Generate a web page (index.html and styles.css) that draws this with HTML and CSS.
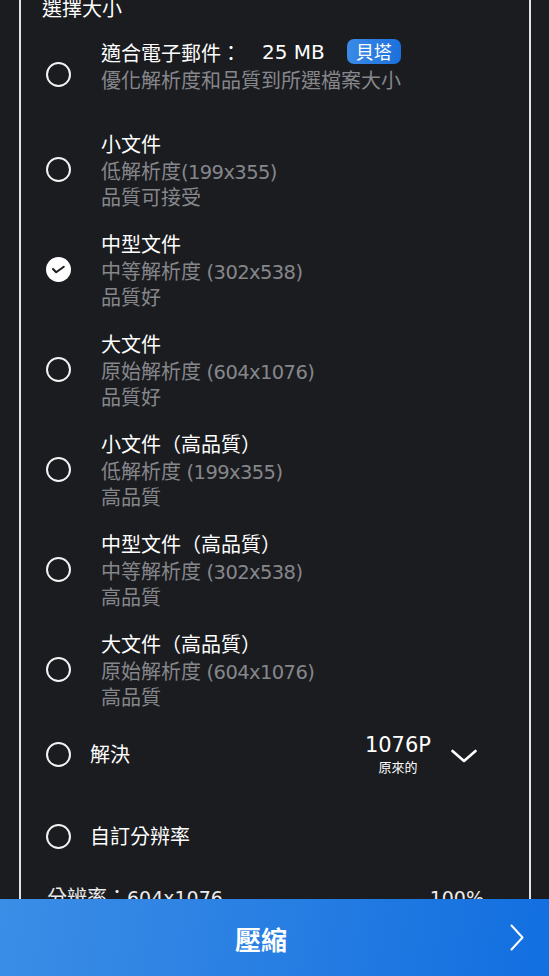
FILE: index.html
```html
<!DOCTYPE html>
<html lang="zh-Hant">
<head>
<meta charset="utf-8">
<title>壓縮</title>
<link rel="stylesheet" href="styles.css">
</head>
<body>
<div class="panel">
  <div class="heading">選擇大小</div>
  <div class="options">
    <div class="opt opt-first">
      <span class="radio"></span>
      <div class="txt">
        <div class="t">適合電子郵件：<span class="num">25 MB</span><span class="badge">貝塔</span></div>
        <div class="s">優化解析度和品質到所選檔案大小</div>
      </div>
    </div>
    <div class="opt">
      <span class="radio"></span>
      <div class="txt">
        <div class="t">小文件</div>
        <div class="s">低解析度<span class="lat">(199x355)</span></div>
        <div class="s">品質可接受</div>
      </div>
    </div>
    <div class="opt">
      <span class="radio checked"><svg viewBox="0 0 25 25" width="25" height="25"><path d="M7 12 L10.2 15.3 L17.8 9.8" fill="none" stroke="#1b1c20" stroke-width="2" stroke-linecap="round" stroke-linejoin="round"/></svg></span>
      <div class="txt">
        <div class="t">中型文件</div>
        <div class="s">中等解析度<span class="lat"> (302x538)</span></div>
        <div class="s">品質好</div>
      </div>
    </div>
    <div class="opt">
      <span class="radio"></span>
      <div class="txt">
        <div class="t">大文件</div>
        <div class="s">原始解析度<span class="lat"> (604x1076)</span></div>
        <div class="s">品質好</div>
      </div>
    </div>
    <div class="opt">
      <span class="radio"></span>
      <div class="txt">
        <div class="t">小文件（高品質）</div>
        <div class="s">低解析度<span class="lat"> (199x355)</span></div>
        <div class="s">高品質</div>
      </div>
    </div>
    <div class="opt">
      <span class="radio"></span>
      <div class="txt">
        <div class="t">中型文件（高品質）</div>
        <div class="s">中等解析度<span class="lat"> (302x538)</span></div>
        <div class="s">高品質</div>
      </div>
    </div>
    <div class="opt">
      <span class="radio"></span>
      <div class="txt">
        <div class="t">大文件（高品質）</div>
        <div class="s">原始解析度<span class="lat"> (604x1076)</span></div>
        <div class="s">高品質</div>
      </div>
    </div>
    <div class="opt opt-line">
      <span class="radio"></span>
      <span class="label">解決</span>
      <div class="res">
        <div class="res-val">
          <span class="res-p">1076P</span>
          <span class="res-sub">原來的</span>
        </div>
        <svg class="chev-down" viewBox="0 0 26 14" width="26" height="14"><path d="M1.5 2 L13 12 L24.5 2" fill="none" stroke="#ffffff" stroke-width="2.6" stroke-linecap="round" stroke-linejoin="round"/></svg>
      </div>
    </div>
    <div class="opt opt-line opt-custom">
      <span class="radio"></span>
      <span class="label">自訂分辨率</span>
    </div>
  </div>
  <div class="info">
    <span>分辨率：<span class="lat-w">604x1076</span></span>
    <span><span class="lat-w">100%</span></span>
  </div>
</div>
<div class="bar">
  <span class="bar-text">壓縮</span>
  <svg class="chev-right" viewBox="0 0 14 27" width="14" height="27"><path d="M1.5 1.5 L12.5 13.5 L1.5 25.5" fill="none" stroke="#ffffff" stroke-width="2" stroke-linecap="round" stroke-linejoin="round"/></svg>
</div>
</body>
</html>
```
FILE: styles.css
```css
* { box-sizing: border-box; }
html, body {
  margin: 0;
  padding: 0;
  background: #1b1c20;
  height: 100%;
  overflow: hidden;
}
body {
  font-family: "DejaVu Sans", "Noto Sans CJK TC", sans-serif;
  color: #ffffff;
}
.panel {
  margin: -30px 0 0 19px;
  width: 512px;
  border: 2px solid #e4e4e6;
  padding-top: 22px;
  padding-bottom: 200px;
}
.heading {
  font-family: "Noto Sans CJK TC", sans-serif;
  font-size: 20px;
  line-height: 28px;
  padding-left: 21px;
  margin-bottom: 16px;
}
.options {
  display: flex;
  flex-direction: column;
  gap: 19px;
}
.opt {
  display: flex;
  align-items: center;
  padding-left: 25px;
}
.opt-first {
  min-height: 72px;
}
.opt-first .txt { align-self: flex-start; }
.radio {
  flex: none;
  width: 25px;
  height: 25px;
  border: 2px solid #f2f2f2;
  border-radius: 50%;
  display: block;
}
.radio.checked {
  border: none;
  background: #ffffff;
}
.radio.checked svg { display: block; }
.txt {
  margin-left: 30px;
  display: flex;
  flex-direction: column;
}
.t {
  font-family: "Noto Sans CJK TC", sans-serif;
  font-weight: 400;
  font-size: 20px;
  line-height: 29px;
  height: 29px;
  color: #ffffff;
  display: flex;
  align-items: center;
  white-space: nowrap;
}
.num {
  font-family: "DejaVu Sans", sans-serif;
  font-weight: 400;
  font-size: 20px;
  margin-left: 21px;
}
.badge {
  margin-left: 22px;
  font-family: "Noto Sans CJK TC", sans-serif;
  font-weight: 400;
  font-size: 18px;
  line-height: 25px;
  height: 25px;
  padding: 0 9px;
  border-radius: 7px;
  background: linear-gradient(90deg, #3a8ae6, #1c70dd);
  color: #ffffff;
  position: relative;
  top: -1px;
}
.s {
  font-family: "Noto Sans CJK TC", sans-serif;
  font-size: 20px;
  line-height: 26px;
  height: 26px;
  color: #86878b;
  white-space: nowrap;
}
.lat {
  font-family: "DejaVu Sans", sans-serif;
  font-size: 19.5px;
  line-height: 1;
  letter-spacing: -0.6px;
}
.opt-line {
  height: 50px;
  padding-right: 52px;
}
.opt-custom { margin-top: 13px; }
.label {
  margin-left: 19px;
  font-family: "Noto Sans CJK TC", sans-serif;
  font-size: 20px;
  line-height: 28px;
}
.res {
  margin-left: auto;
  display: flex;
  align-items: center;
  gap: 20px;
}
.res-val {
  display: flex;
  flex-direction: column;
  align-items: center;
}
.res-p {
  font-family: "DejaVu Sans", sans-serif;
  font-size: 21px;
  line-height: 24px;
}
.res-sub {
  font-family: "Noto Sans CJK TC", sans-serif;
  font-size: 13px;
  line-height: 16px;
  margin-top: 2px;
}
.chev-down { display: block; margin-top: 4px; }
.info {
  display: flex;
  justify-content: space-between;
  padding: 0 45px 0 26px;
  margin-top: 22px;
  font-family: "Noto Sans CJK TC", sans-serif;
  font-size: 20px;
  line-height: 28px;
  height: 28px;
  color: #ececec;
}
.lat-w {
  font-family: "DejaVu Sans", sans-serif;
  font-size: 19px;
  line-height: 1;
}
.bar {
  position: fixed;
  left: 0;
  right: 0;
  bottom: 0;
  height: 77px;
  display: flex;
  align-items: center;
  background: linear-gradient(100deg, #3b8ee6 0%, #2a80e3 45%, #126fe0 100%);
}
.bar-text {
  flex: 1;
  text-align: center;
  padding-left: 12px;
  font-family: "Noto Sans CJK TC", sans-serif;
  font-weight: 700;
  font-size: 26px;
  line-height: 30px;
  margin-top: 3px;
}
.chev-right {
  display: block;
  margin-right: 25px;
}
```
